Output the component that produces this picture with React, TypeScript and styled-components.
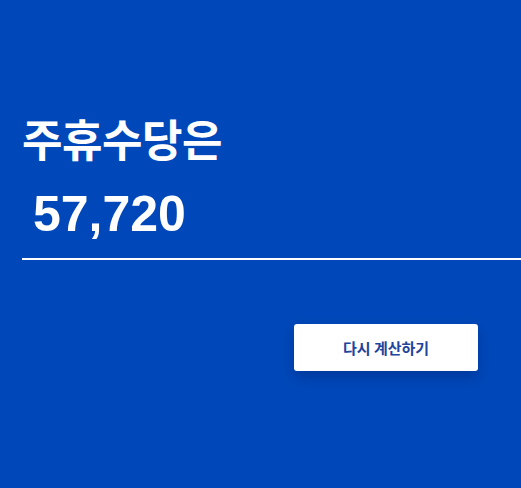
import React from "react";
import styled, { createGlobalStyle } from "styled-components";

const Global = createGlobalStyle`
  html, body { margin: 0; padding: 0; background: #0048ba; }
  #root { min-height: 100vh; }
`;

const Page = styled.main`
  box-sizing: border-box;
  width: 100%;
  min-height: 488px;
  background: #0048ba;
  padding: 110px 0 0 22px;
  display: flex;
  flex-direction: column;
  font-family: "Noto Sans CJK KR", "Liberation Sans", sans-serif;
  color: #ffffff;
`;

const Title = styled.h1`
  margin: 0;
  font-size: 44px;
  font-weight: 700;
  line-height: 56px;
  letter-spacing: -0.5px;
`;

const Amount = styled.div`
  margin: 20px 0 0 11px;
  font-family: "Liberation Sans", Arial, sans-serif;
  font-size: 50px;
  font-weight: 700;
  line-height: 56px;
`;

const Rule = styled.hr`
  margin: 16px 0 0 0;
  border: none;
  height: 2px;
  background: #ffffff;
  width: 100%;
`;

const Actions = styled.div`
  display: flex;
  justify-content: flex-end;
  padding-right: 43px;
  margin-top: 64px;
`;

const Button = styled.button`
  width: 184px;
  height: 47px;
  border: none;
  border-radius: 3px;
  background: #ffffff;
  color: #21449c;
  font-family: "Noto Sans CJK KR", "Liberation Sans", sans-serif;
  font-size: 15px;
  font-weight: 700;
  cursor: pointer;
  box-shadow: 0 6px 14px rgba(0, 20, 80, 0.3);
`;

export default function App() {
  return (
    <>
      <Global />
      <Page>
        <Title>주휴수당은</Title>
        <Amount>57,720</Amount>
        <Rule />
        <Actions>
          <Button>다시 계산하기</Button>
        </Actions>
      </Page>
    </>
  );
}
